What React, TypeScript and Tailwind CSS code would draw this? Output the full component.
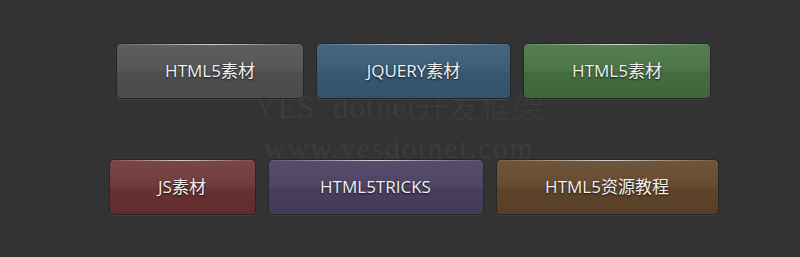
import React from "react";

type Btn = { label: string; w: string; bg: string };

const rowOne: Btn[] = [
  {
    label: "HTML5素材",
    w: "w-[188px]",
    bg: "bg-[linear-gradient(#5e5e5e,#565656_50%,#4f4f4f_52%,#4a4a4a)]",
  },
  {
    label: "JQUERY素材",
    w: "w-[195px]",
    bg: "bg-[linear-gradient(#46657f,#3d5c77_50%,#37566f_52%,#33526c)]",
  },
  {
    label: "HTML5素材",
    w: "w-[188px]",
    bg: "bg-[linear-gradient(#567f51,#4b7547_50%,#436c3f_52%,#3e663a)]",
  },
];

const rowTwo: Btn[] = [
  {
    label: "JS素材",
    w: "w-[147px]",
    bg: "bg-[linear-gradient(#7b4646,#703b3b_50%,#683232_52%,#612c2c)]",
  },
  {
    label: "HTML5TRICKS",
    w: "w-[216px]",
    bg: "bg-[linear-gradient(#564d6d,#4e4564_50%,#483f5e_52%,#433a58)]",
  },
  {
    label: "HTML5资源教程",
    w: "w-[223px]",
    bg: "bg-[linear-gradient(#6f553a,#664b31_50%,#5e442b_52%,#583e26)]",
  },
];

function GlossButton({ label, w, bg }: Btn) {
  return (
    <a
      href="#"
      className={`relative flex h-[56px] items-center justify-center rounded-[5px] border border-[#262626] ${w} ${bg} text-[17px] text-[#f0f0f0] shadow-[0_1px_0_rgba(255,255,255,0.07),inset_0_1px_0_rgba(255,255,255,0.08)] [text-shadow:0_1px_2px_rgba(0,0,0,0.8)]`}
    >
      <span className="absolute left-2 right-2 top-0 h-px bg-[linear-gradient(90deg,transparent,rgba(255,255,255,0.7),transparent)]"></span>
      {label}
    </a>
  );
}

export default function App() {
  return (
    <div className="relative h-[257px] w-[800px] overflow-hidden bg-[#333333] font-['Open_Sans','Noto_Sans_CJK_SC',sans-serif]">
      {/* watermark */}
      <div className="pointer-events-none absolute left-[254px] top-[92px] text-[#3c3c3c] font-['Liberation_Serif','Noto_Sans_CJK_SC',serif] leading-none">
        <div className="text-[31px] tracking-[1px] whitespace-pre">
          YES  dotnet<span className="font-light">开发框架</span>
        </div>
        <div className="mt-[10px] ml-[10px] text-[30px] tracking-[1.5px]">www.yesdotnet.com</div>
      </div>

      <div className="relative flex flex-col pl-[27px] pt-[43px]">
        <div className="flex justify-center gap-[12px]">
          {rowOne.map((b, i) => (
            <GlossButton key={i} {...b} />
          ))}
        </div>
        <div className="mt-[60px] flex justify-center gap-[12px]">
          {rowTwo.map((b, i) => (
            <GlossButton key={i} {...b} />
          ))}
        </div>
      </div>
    </div>
  );
}
